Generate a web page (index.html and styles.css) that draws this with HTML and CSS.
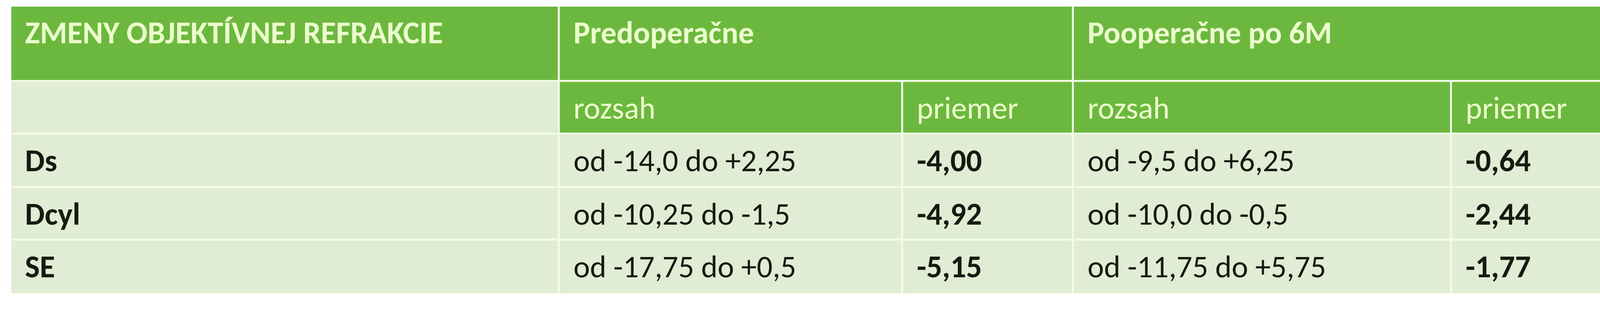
FILE: index.html
```html
<!DOCTYPE html>
<html lang="sk">
<head>
<meta charset="utf-8">
<title>Zmeny objektívnej refrakcie</title>
<link rel="stylesheet" href="styles.css">
</head>
<body>
<div class="page">
  <div class="grid">
    <div class="cell head strong">ZMENY OBJEKTÍVNEJ REFRAKCIE</div>
    <div class="cell head strong span2">Predoperačne</div>
    <div class="cell head strong span2">Pooperačne po 6M</div>

    <div class="cell light"></div>
    <div class="cell head">rozsah</div>
    <div class="cell head">priemer</div>
    <div class="cell head">rozsah</div>
    <div class="cell head">priemer</div>

    <div class="cell light strong">Ds</div>
    <div class="cell light">od -14,0 do +2,25</div>
    <div class="cell light strong">-4,00</div>
    <div class="cell light">od -9,5 do +6,25</div>
    <div class="cell light strong">-0,64</div>

    <div class="cell light strong">Dcyl</div>
    <div class="cell light">od -10,25 do -1,5</div>
    <div class="cell light strong">-4,92</div>
    <div class="cell light">od -10,0 do -0,5</div>
    <div class="cell light strong">-2,44</div>

    <div class="cell light strong">SE</div>
    <div class="cell light">od -17,75 do +0,5</div>
    <div class="cell light strong">-5,15</div>
    <div class="cell light">od -11,75 do +5,75</div>
    <div class="cell light strong">-1,77</div>
  </div>
</div>
</body>
</html>
```
FILE: styles.css
```css
html, body {
  margin: 0;
  padding: 0;
  background: #ffffff;
}

.page {
  padding: 17px 0 0 29px;
}

.grid {
  display: grid;
  grid-template-columns: 1399px 874px 432px 963px 492px;
  grid-template-rows: 188px 130px 132px 130px 135px;
  gap: 5px;
  width: max-content;
  background: #f1fbe8;
  font-family: "Carlito", "Open Sans", "Liberation Sans", sans-serif;
  font-size: 80px;
  line-height: 74px;
}

.cell {
  box-sizing: border-box;
  padding: 30px 0 0 35px;
  white-space: nowrap;
  overflow: hidden;
}

.span2 {
  grid-column: span 2;
}

.head {
  background: #6cb83e;
  color: #ebfdcd;
}

.light {
  background: #e0ecd3;
  color: #151a12;
}

.strong {
  font-weight: 700;
}
```
